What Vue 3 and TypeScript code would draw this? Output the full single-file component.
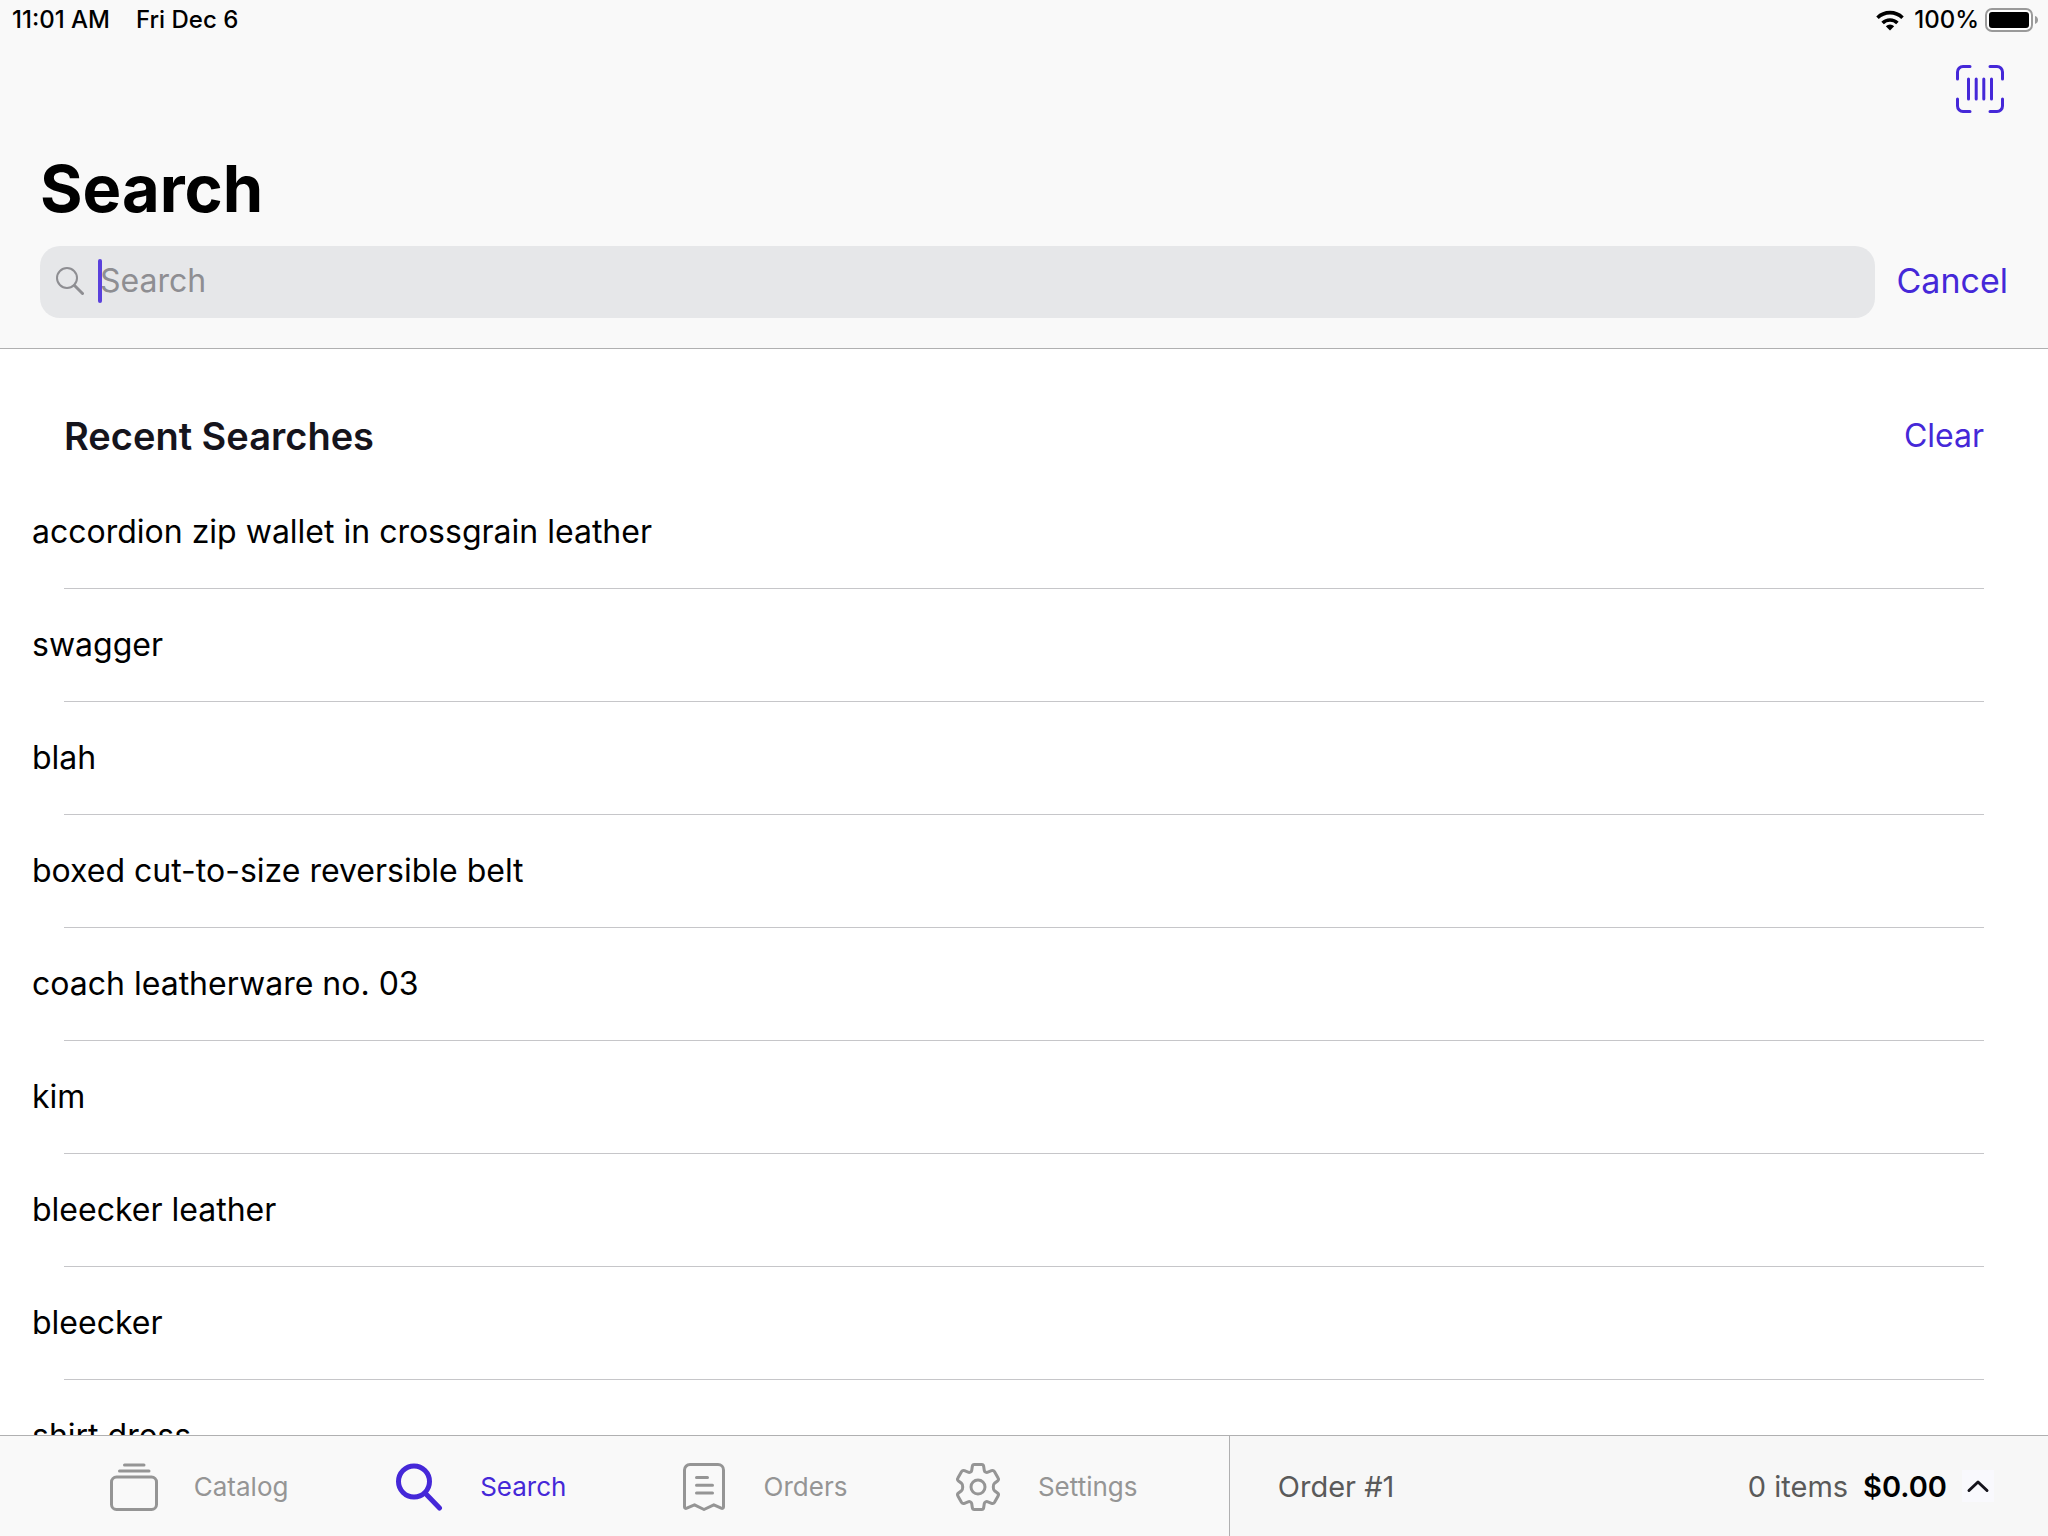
<script setup lang="ts">
import { ref } from 'vue'

type TabId = 'catalog' | 'search' | 'orders' | 'settings'

const tabs: { id: TabId; label: string }[] = [
  { id: 'catalog', label: 'Catalog' },
  { id: 'search', label: 'Search' },
  { id: 'orders', label: 'Orders' },
  { id: 'settings', label: 'Settings' },
]

const activeTab = ref<TabId>('search')
const query = ref('')
const recent = ref<string[]>([
  'accordion zip wallet in crossgrain leather',
  'swagger',
  'blah',
  'boxed cut-to-size reversible belt',
  'coach leatherware no. 03',
  'kim',
  'bleecker leather',
  'bleecker',
  'shirt dress',
])
</script>

<template>
  <div class="app">
    <header class="header">
      <div class="status">
        <span class="status-group">
          <span>11:01 AM</span>
          <span>Fri Dec 6</span>
        </span>
        <span class="status-right">
          <svg class="wifi" viewBox="0 0 28 21" aria-hidden="true">
            <path d="M14 20.5 9.8 16.2a6 6 0 0 1 8.4 0Z" />
            <g fill="none" stroke="currentColor" stroke-width="3.6">
              <path d="M6.6 13a10.6 10.6 0 0 1 14.8 0" />
              <path d="M1.5 7.7a18 18 0 0 1 25 0" />
            </g>
          </svg>
          <span>100%</span>
          <svg class="battery" viewBox="0 0 54 24" aria-hidden="true">
            <rect x="1" y="1" width="46" height="22" rx="6" fill="#fff" stroke="#9a9a9a" stroke-width="2" />
            <rect x="4" y="4" width="40" height="16" rx="3" fill="#000" />
            <path d="M50 8c2 .6 3 2.200 3 4s-1 3.400-3 4Z" fill="#9a9a9a" />
          </svg>
        </span>
      </div>

      <div class="nav">
        <button class="scan" type="button" aria-label="Scan barcode">
          <svg viewBox="0 0 48 48" aria-hidden="true">
            <g fill="none" stroke="currentColor" stroke-width="3" stroke-linecap="round">
              <path d="M1.500 14V7a5.500 5.500 0 0 1 5.500-5.500h7" />
              <path d="M34 1.500h7a5.500 5.500 0 0 1 5.500 5.500v7" />
              <path d="M46.500 34v7a5.500 5.500 0 0 1-5.500 5.500h-7" />
              <path d="M14 46.500H7a5.500 5.500 0 0 1-5.500-5.500v-7" />
              <path d="M12.500 14v20M20.200 14v20M27.800 14v20M35.500 14v20" />
            </g>
          </svg>
        </button>
      </div>

      <h1 class="title">Search</h1>

      <form class="search-row" role="search" @submit.prevent>
        <label class="field">
          <svg class="glass" viewBox="0 0 28 28" aria-hidden="true">
            <g fill="none" stroke="currentColor" stroke-linecap="round">
              <circle cx="11" cy="11" r="10" stroke-width="2" />
              <path d="M18.500 18.500l8 8" stroke-width="3" />
            </g>
          </svg>
          <span class="entry">
            <input v-model="query" type="text" placeholder="Search" aria-label="Search" />
            <span v-if="!query" class="caret"></span>
          </span>
        </label>
        <button class="link cancel" type="button" @click="query = ''">Cancel</button>
      </form>
    </header>

    <main class="content">
      <div class="section-head">
        <h2>Recent Searches</h2>
        <button class="link" type="button" @click="recent = []">Clear</button>
      </div>
      <ul class="list">
        <li v-for="item in recent" :key="item">
          <button type="button" @click="query = item">{{ item }}</button>
        </li>
      </ul>
    </main>

    <footer class="bottom">
      <nav class="tabs">
        <button
          v-for="tab in tabs"
          :key="tab.id"
          type="button"
          class="tab"
          :class="{ active: tab.id === activeTab }"
          @click="activeTab = tab.id"
        >
          <svg viewBox="0 0 48 48" aria-hidden="true">
            <g fill="none" stroke="currentColor" stroke-width="3" stroke-linecap="round" stroke-linejoin="round">
              <template v-if="tab.id === 'catalog'">
                <path d="M14.500 2h19.500M9.500 8h29.500" />
                <rect x="1.500" y="14" width="45" height="32.500" rx="5" />
              </template>
              <template v-else-if="tab.id === 'search'">
                <circle cx="18" cy="18.500" r="15.500" stroke-width="5" />
                <path d="M30 31l13.500 14" stroke-width="5" />
              </template>
              <template v-else-if="tab.id === 'orders'">
                <path d="M4.500 44V7a5.500 5.500 0 0 1 5.500-5.500h28A5.500 5.500 0 0 1 43.500 7v37c0 1-1 1.700-2.300 1.200L33.800 41.800 24 46.500 14.500 41.800 6.800 45.200C5.500 45.700 4.500 45 4.500 44Z" />
                <path d="M16.500 14.500h11M16.500 22.300h16M16.500 30h16" />
              </template>
              <template v-else>
                <circle cx="24" cy="24" r="7" />
                <path d="M20.300 1.500h7.400c1.200 0 1.800.8 2 2l.6 4c.2 1.500 2.200 2.300 3.600 1.700l3.600-1.500c1.300-.5 2.200-.3 2.900.8l3.700 6.600c.7 1.100.5 2-.6 2.900l-3 2.300c-1.200.9-1.200 2.600-1.200 3.700s0 2.800 1.200 3.700l3 2.300c1.100.9 1.300 1.800.6 2.900l-3.700 6.600c-.7 1.100-1.600 1.300-2.900.8l-3.600-1.500c-1.400-.6-3.400.2-3.600 1.700l-.6 4c-.2 1.200-.8 2-2 2h-7.400c-1.200 0-1.800-.8-2-2l-.6-4c-.2-1.500-2.200-2.300-3.600-1.700l-3.600 1.500c-1.300.5-2.200.3-2.900-.8l-3.700-6.600c-.7-1.100-.5-2 .6-2.900l3-2.300c1.200-.9 1.200-2.600 1.200-3.700s0-2.800-1.200-3.700l-3-2.300c-1.100-.9-1.300-1.800-.6-2.900l3.700-6.600c.7-1.100 1.600-1.300 2.900-.8l3.600 1.500c1.400.6 3.400-.2 3.600-1.700l.6-4c.2-1.200.8-2 2-2Z" />
              </template>
            </g>
          </svg>
          <span>{{ tab.label }}</span>
        </button>
      </nav>

      <button class="order" type="button">
        <span class="order-name">Order #1</span>
        <span>0 items</span>
        <strong>$0.00</strong>
        <svg class="chevron" viewBox="0 0 32 32" aria-hidden="true">
          <path d="M7 20.500 16 12l9 8.500" fill="none" stroke="currentColor" stroke-width="3" stroke-linecap="round" stroke-linejoin="round" />
        </svg>
      </button>
    </footer>
  </div>
</template>

<style>
html,
body {
  margin: 0;
  background: #fff;
}
</style>

<style scoped>
.app {
  --accent: #4528d8;
  --line: #b0b0b1;
  display: flex;
  flex-direction: column;
  height: 100vh;
  overflow: hidden;
  background: #fff;
  color: #000;
  font-family: Inter, 'Liberation Sans', sans-serif;
  font-size: 32px;
}

button,
input {
  margin: 0;
  padding: 0;
  border: 0;
  background: none;
  color: inherit;
  font: inherit;
}

svg {
  display: block;
  flex: none;
}

.header {
  flex: none;
  background: #f9f9f9;
  border-bottom: 1px solid var(--line);
}

.status {
  display: flex;
  justify-content: space-between;
  height: 40px;
  padding: 0 9px 0 12px;
  font-size: 24px;
  font-weight: 500;
  line-height: 40px;
}

.status-group {
  display: flex;
  gap: 26px;
}

.status-right {
  display: flex;
  align-items: center;
}

.wifi {
  width: 28px;
  height: 21px;
  margin-right: 10px;
}

.battery {
  width: 54px;
  height: 24px;
  margin-left: 6px;
}

.nav {
  display: flex;
  align-items: center;
  justify-content: flex-end;
  height: 98px;
  padding: 0 44px;
}

.scan {
  color: var(--accent);
}

.scan svg {
  width: 48px;
  height: 48px;
}

.title {
  margin: 0;
  padding: 9px 40px 15px;
  font-size: 65px;
  font-weight: 700;
  line-height: 84px;
}

.search-row {
  display: flex;
  align-items: center;
  gap: 22px;
  padding: 0 40px 30px;
}

.field {
  box-sizing: border-box;
  display: flex;
  flex: 1;
  align-items: center;
  gap: 16px;
  height: 72px;
  padding: 0 16px 3px;
  border-radius: 20px;
  background: #e6e7e9;
  color: #8e8e92;
}

.glass {
  width: 28px;
  height: 28px;
}

.entry {
  position: relative;
  display: flex;
  flex: 1;
}

.entry input {
  flex: 1;
  min-width: 0;
  outline: 0;
  color: #000;
  line-height: 44px;
}

.entry input::placeholder {
  color: #8e8e92;
  opacity: 1;
}

.caret {
  position: absolute;
  top: 0;
  left: -2px;
  width: 4px;
  height: 44px;
  border-radius: 2px;
  background: #5a40dc;
}

.link {
  color: var(--accent);
}

.cancel {
  padding-bottom: 4px;
  font-size: 34px;
}

.content {
  flex: 1;
  min-height: 0;
  overflow: hidden;
}

.section-head {
  display: flex;
  align-items: center;
  justify-content: space-between;
  padding: 47px 64px 0;
  line-height: 80px;
}

.section-head h2 {
  margin: 0;
  color: #15141c;
  font-size: 38px;
  font-weight: 600;
}

.list {
  margin: 0;
  padding: 0;
  list-style: none;
}

.list button {
  display: block;
  width: 100%;
  padding: 0 32px;
  line-height: 112px;
  text-align: left;
}

.list li::after {
  content: '';
  display: block;
  height: 1px;
  margin: 0 64px;
  background: #c6c6c9;
}

.bottom {
  display: grid;
  flex: none;
  grid-template-columns: 3fr 2fr;
  height: 100px;
  border-top: 1px solid var(--line);
  background: #f9f9f9;
}

.tabs {
  display: flex;
  padding: 0 42px 0 58px;
}

.tab {
  display: flex;
  flex: 1;
  align-items: center;
  justify-content: center;
  gap: 36px;
  color: #959595;
  font-size: 26px;
}

.tab svg {
  width: 48px;
  height: 48px;
  margin-top: 2px;
}

.tab.active {
  color: var(--accent);
}

.order {
  display: flex;
  align-items: center;
  gap: 15px;
  padding: 0 54px 0 48px;
  border-left: 1px solid var(--line);
  background: #f7f7f7;
  color: #5a5a5a;
  font-size: 29px;
}

.order-name {
  margin-right: auto;
}

.order strong {
  color: #000;
  font-weight: 600;
}

.chevron {
  width: 32px;
  height: 32px;
  background: #f9f9fd;
  color: #15141c;
}
</style>
